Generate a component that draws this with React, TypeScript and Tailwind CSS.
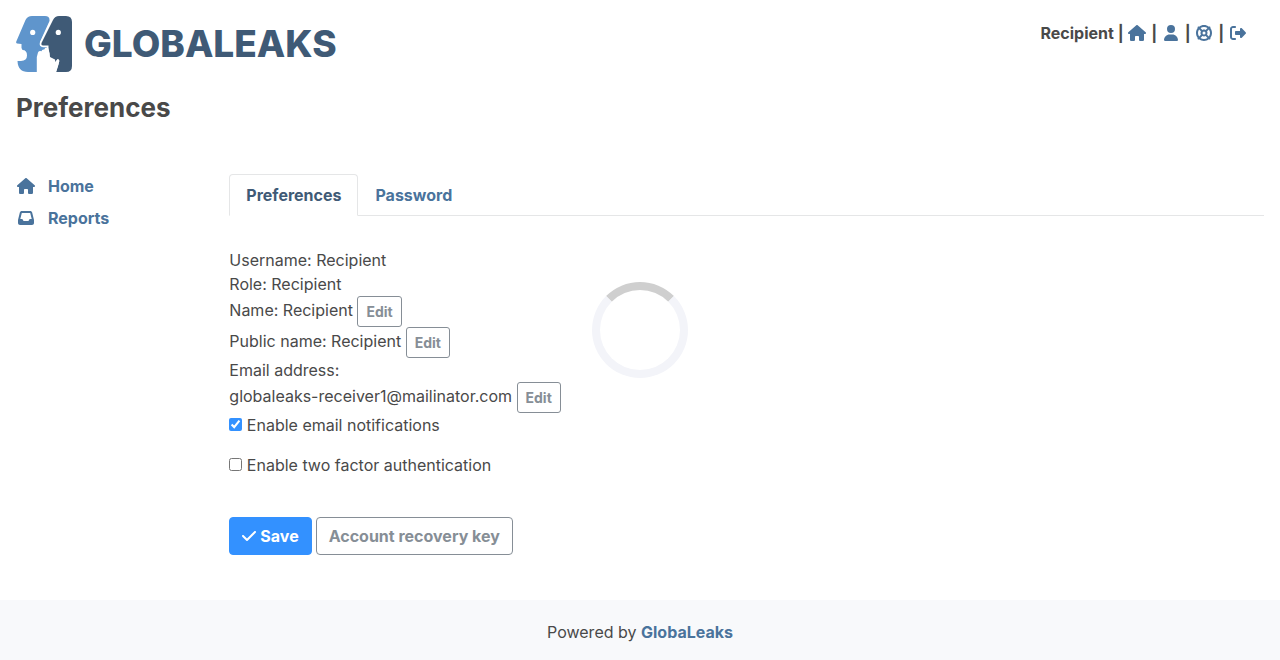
import { Fragment, useState, type ReactNode } from "react";
import {
  FaCheck,
  FaHouse,
  FaInbox,
  FaLifeRing,
  FaRightFromBracket,
  FaUser,
} from "react-icons/fa6";

const darkHead =
  "M43 0H50Q56 0 56 6V50Q56 56 50 56H40L42.300 49L43.300 45Q43 43 41.300 43.500L39.300 46.500L38 44L33.500 41.500V37L32.500 35V29.500H27Q25 29.500 25.500 27L37 4Q39 0 43 0Z";

function LogoMark() {
  return (
    <svg viewBox="0 0 56 56" className="size-14 shrink-0" aria-hidden="true">
      <path
        fill="#5f95cc"
        d="M16 0H29Q34 0 33.500 5L24 26V30H31V56H12Q2 56 1.500 45H5Q11 44.500 11 39.500Q11 34 6.500 34L5.500 32V28L1 27.500Q-.5 27 .5 25L9.500 4Q11.500 0 16 0Z"
      />
      <path fill="none" stroke="#fff" strokeWidth="3.400" d="M41 -1Q38 1 37 4L25.500 27Q25 29.500 27 29.500H32.500" />
      <path fill="#3f5a76" d={darkHead} />
      <path
        fill="#fff"
        d="M20.800 56.500V41L22 36.500Q23 34.500 25.500 35.300Q26 33 28.300 33.500Q28.500 31 32 31.500L33 34.500L34 41L39 43.500L39.300 46L41.300 43.300Q43.500 43 43.300 45L42.300 49L40 56.500Z"
      />
      <circle cx="16.700" cy="16.400" r="2.600" fill="#fff" />
      <circle cx="42.300" cy="16.400" r="2.600" fill="#fff" />
    </svg>
  );
}

const toolbar = [
  { label: "Home", icon: <FaHouse className="h-4 w-[18px]" /> },
  { label: "Preferences", icon: <FaUser className="h-4 w-[14px]" /> },
  { label: "Support", icon: <FaLifeRing className="size-4" /> },
  { label: "Logout", icon: <FaRightFromBracket className="size-4" /> },
];

const navigation = [
  { label: "Home", icon: <FaHouse className="h-4 w-[18px]" /> },
  { label: "Reports", icon: <FaInbox className="size-4" /> },
];

function Field({ children, label }: { children: ReactNode; label: string }) {
  return (
    <div>
      {children}{" "}
      <button
        type="button"
        aria-label={`Edit ${label}`}
        className="rounded-[3px] border border-[#868e96] px-2 py-1 align-middle text-sm leading-[21px] font-bold text-[#868e96]"
      >
        Edit
      </button>
    </div>
  );
}

export default function App() {
  const [notify, setNotify] = useState(true);
  const [twoFactor, setTwoFactor] = useState(false);

  return (
    <div className="flex min-h-screen flex-col bg-white font-['Inter','Liberation_Sans',sans-serif] text-base text-[#494949]">
      <header className="flex items-start justify-between p-4">
        <div>
          <a href="#home" className="flex items-center gap-3 text-[#3f5a76]">
            <LogoMark />
            <span className="text-[37px] leading-10 font-extrabold">GLOBALEAKS</span>
          </a>
          <h1 className="mt-4 text-[26px] leading-10 font-bold">Preferences</h1>
        </div>
        <div className="mt-[5px] pr-4 font-bold">
          Recipient
          {toolbar.map(({ label, icon }) => (
            <Fragment key={label}>
              {" | "}
              <a
                href="#toolbar"
                aria-label={label}
                className="inline-flex h-6 w-5 items-center justify-center align-top text-[#4a739c]"
              >
                {icon}
              </a>
            </Fragment>
          ))}
        </div>
      </header>

      <div className="grid flex-1 grid-cols-6 pt-[30px]">
        <nav className="flex flex-col gap-2 px-4">
          {navigation.map(({ label, icon }) => (
            <a key={label} href="#nav" className="flex items-center gap-3 font-bold text-[#4a739c]">
              <span className="flex w-5 justify-center">{icon}</span>
              {label}
            </a>
          ))}
        </nav>

        <main className="col-span-5 px-4">
          <div role="tablist" className="flex border-b border-[#e5e6e7] font-bold">
            <button
              type="button"
              role="tab"
              aria-selected="true"
              className="-mb-px rounded-t border border-[#e5e6e7] border-b-white bg-white px-4 py-2 text-[#3f5a76]"
            >
              Preferences
            </button>
            <button
              type="button"
              role="tab"
              aria-selected="false"
              className="-mb-px border border-transparent px-4 py-2 text-[#4a739c]"
            >
              Password
            </button>
          </div>

          <form className="pt-8" onSubmit={(event) => event.preventDefault()}>
            <div>Username: Recipient</div>
            <div>Role: Recipient</div>
            <Field label="name">Name: Recipient</Field>
            <Field label="public name">Public name: Recipient</Field>
            <div>Email address:</div>
            <Field label="email address">globaleaks-receiver1@mailinator.com</Field>
            <div>
              <label>
                <input
                  type="checkbox"
                  className="accent-[#3391ff]"
                  checked={notify}
                  onChange={(event) => setNotify(event.target.checked)}
                />{" "}
                Enable email notifications
              </label>
            </div>
            <div className="mt-4">
              <label>
                <input
                  type="checkbox"
                  className="accent-[#3391ff]"
                  checked={twoFactor}
                  onChange={(event) => setTwoFactor(event.target.checked)}
                />{" "}
                Enable two factor authentication
              </label>
            </div>
            <div className="mt-10 flex gap-1 font-bold">
              <button
                type="submit"
                className="flex items-center gap-1 rounded border border-[#3391ff] bg-[#3391ff] px-3 py-[6px] text-white"
              >
                <FaCheck className="h-4 w-[14px]" />
                Save
              </button>
              <button
                type="button"
                className="rounded border border-[#868e96] px-3 py-[6px] text-[#868e96]"
              >
                Account recovery key
              </button>
            </div>
          </form>
        </main>
      </div>

      <footer className="bg-[#f8f9fb] pt-5 pb-4 text-center">
        Powered by{" "}
        <a href="#globaleaks" className="font-bold text-[#4a739c]">
          GlobaLeaks
        </a>
      </footer>

      <div className="pointer-events-none fixed inset-0 flex items-center justify-center" role="status" aria-label="Loading">
        <div className="size-24 rounded-full border-8 border-[#f3f4f9] border-t-[#cfcfcf]" />
      </div>
    </div>
  );
}
